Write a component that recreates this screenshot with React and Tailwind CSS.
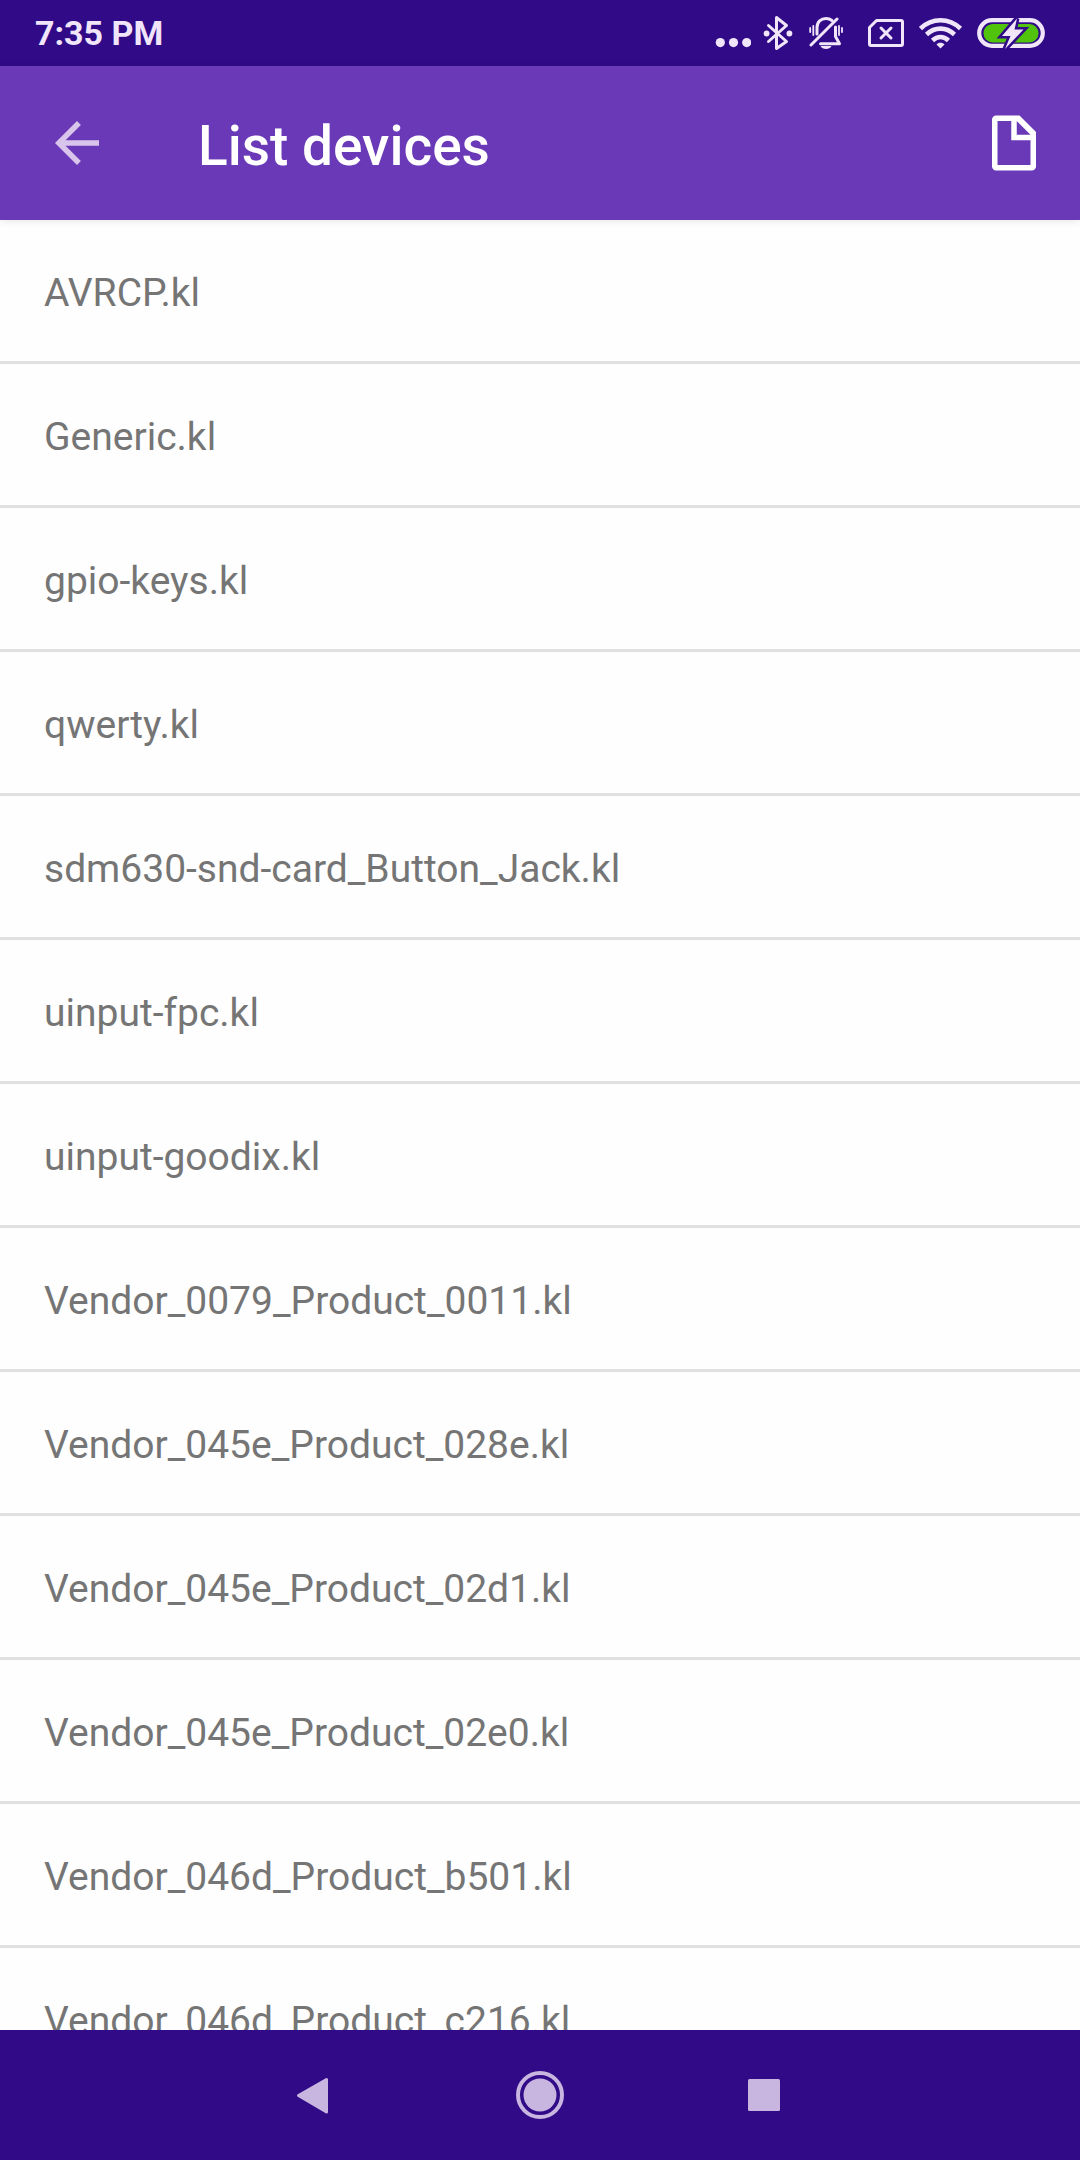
import React from "react";

const devices = [
    "AVRCP.kl",
    "Generic.kl",
    "gpio-keys.kl",
    "qwerty.kl",
    "sdm630-snd-card_Button_Jack.kl",
    "uinput-fpc.kl",
    "uinput-goodix.kl",
    "Vendor_0079_Product_0011.kl",
    "Vendor_045e_Product_028e.kl",
    "Vendor_045e_Product_02d1.kl",
    "Vendor_045e_Product_02e0.kl",
    "Vendor_046d_Product_b501.kl",
    "Vendor_046d_Product_c216.kl",
];

const StatusBar = () => (
    <div className="flex h-[66px] shrink-0 items-center justify-between bg-[#300a87] px-[35px] text-[#f1e5fa]">
        <span className="text-[34px] leading-10 font-bold">7:35 PM</span>
        <div className="flex items-center gap-3">
            {/* More notifications */}
            <svg className="h-9 w-9" viewBox="0 0 36 36" fill="currentColor">
                <circle cx="5.3" cy="27.6" r="4.6" />
                <circle cx="18.5" cy="27.6" r="4.6" />
                <circle cx="31.7" cy="27.6" r="4.6" />
            </svg>
            {/* Bluetooth */}
            <svg className="h-9 w-[34px]" viewBox="0 0 34 36" fill="none" stroke="currentColor" strokeWidth="3" strokeLinejoin="round" strokeLinecap="round">
                <path d="M5.5 10.5L23.5 26.5L13.5 33.5V2.5L23.5 10.5L5.5 26.5" />
                <circle cx="3.6" cy="18.5" r="2.9" fill="currentColor" stroke="none" />
                <circle cx="26.4" cy="18.5" r="2.9" fill="currentColor" stroke="none" />
            </svg>
            {/* Silent */}
            <svg className="h-9 w-[42px]" viewBox="0 0 42 36" fill="none" stroke="currentColor" strokeWidth="3" strokeLinecap="round" strokeLinejoin="round">
                <path d="M2 30L28 4" />
                <path d="M8 19V12.5C8 7 12 3.5 17 3.5C19.5 3.5 21.5 4.3 23 5.5" />
                <path d="M26.5 12V21.5L30.5 28.8H11.5" />
                <path d="M11.5 31H22.5C21 35 13 35 11.5 31Z" fill="currentColor" stroke="none" />
                <path d="M1.2 13V17M4.3 11V20M30 11V20M33 13V17" strokeWidth="1.8" />
            </svg>
            {/* No SIM */}
            <svg className="h-9 w-11" viewBox="0 0 44 36" fill="none" stroke="currentColor" strokeWidth="3" strokeLinejoin="round" strokeLinecap="round">
                <path d="M13.5 5.5H38C39 5.5 39.5 6 39.5 7V29C39.5 30 39 30.5 38 30.5H8C7 30.5 6.5 30 6.5 29V12.5Z" />
                <path d="M18 13L28 23M28 13L18 23" />
            </svg>
            {/* Wi-Fi */}
            <svg className="h-9 w-[46px]" viewBox="0 0 46 36" fill="none" stroke="currentColor" strokeWidth="4.6">
                <path d="M1.5 13.5C13 2.500 30 2.500 41.500 13.500" />
                <path d="M7.5 19.500C16 11.700 27 11.700 35.500 19.500" />
                <path d="M13.500 25.500C18.500 21 24.500 21 29.500 25.500" />
                <path d="M17.500 29.500C19 27 24 27 25.500 29.500L21.500 33.500Z" fill="currentColor" stroke="none" />
            </svg>
            {/* Battery */}
            <svg className="h-9 w-[68px]" viewBox="0 0 68 36">
                <rect x="2.2" y="5.2" width="63.600" height="25.600" rx="12.800" fill="none" stroke="currentColor" strokeWidth="4.200" />
                <rect x="6.500" y="9" width="55" height="18.500" rx="9" fill="#52c30d" />
                <path d="M40 3.500L25 21H33.500L28 34L46.500 14.500H37.500Z" fill="currentColor" stroke="#300a87" strokeWidth="5" paintOrder="stroke" />
            </svg>
        </div>
    </div>
);

const AppBar = () => (
    <header className="z-10 flex h-[154px] shrink-0 items-center bg-[#6a39b7] px-[33px] shadow-[0_1px_8px_rgba(0,0,0,0.1)]">
        <button type="button" aria-label="Back" className="px-[11px]">
            <svg className="h-[66px] w-[66px] text-[#d9c5ec]" viewBox="0 0 24 24" fill="currentColor">
                <path d="M20 11H7.830l5.590-5.590L12 4l-8 8 8 8 1.410-1.410L7.830 13H20v-2z" />
            </svg>
        </button>
        <h1 className="ml-[77px] flex-1 pt-1.5 text-[55px] leading-[64px] font-medium text-white">List devices</h1>
        <button type="button" aria-label="New file">
            <svg className="h-[66px] w-[66px] text-white" viewBox="0 0 24 24" fill="currentColor">
                <path fillRule="evenodd" d="M5.500 2H14L20 8V20.500A1.500 1.500 0 0 1 18.500 22H5.500A1.500 1.500 0 0 1 4 20.500V3.500A1.500 1.500 0 0 1 5.500 2ZM6 4V20H18V11H11V4ZM13 4V9H18Z" />
            </svg>
        </button>
    </header>
);

const NavBar = () => (
    <nav className="flex h-[130px] shrink-0 items-center justify-center gap-44 bg-[#300a87] text-[#c8b5e0]">
        <button type="button" aria-label="Back">
            <svg className="h-12 w-12" viewBox="0 0 48 48" fill="currentColor" stroke="currentColor" strokeWidth="3" strokeLinejoin="round">
                <path d="M6.500 24.500L34.500 8.500V41Z" />
            </svg>
        </button>
        <button type="button" aria-label="Home">
            <svg className="h-12 w-12" viewBox="0 0 48 48" fill="currentColor">
                <circle cx="24" cy="24" r="22" fill="none" stroke="currentColor" strokeWidth="4" />
                <circle cx="24" cy="24" r="16.500" />
            </svg>
        </button>
        <button type="button" aria-label="Recent apps">
            <svg className="h-12 w-12" viewBox="0 0 48 48" fill="currentColor">
                <rect x="8" y="8" width="32" height="32" rx="1.500" />
            </svg>
        </button>
    </nav>
);

const App = () => {
    return (
        <div className="flex h-screen flex-col bg-[#fefefe] font-['Roboto',sans-serif]">
            <StatusBar />
            <AppBar />
            <ul className="min-h-0 flex-1 overflow-hidden">
                {devices.map((name) => (
                    <li key={name} className="border-b-3 border-[#e0e0e0]">
                        <button type="button" className="block w-full px-11 pt-[49px] pb-11 text-left text-[39px] leading-12 text-[#757575]">
                            {name}
                        </button>
                    </li>
                ))}
            </ul>
            <NavBar />
        </div>
    );
};

export default App;
